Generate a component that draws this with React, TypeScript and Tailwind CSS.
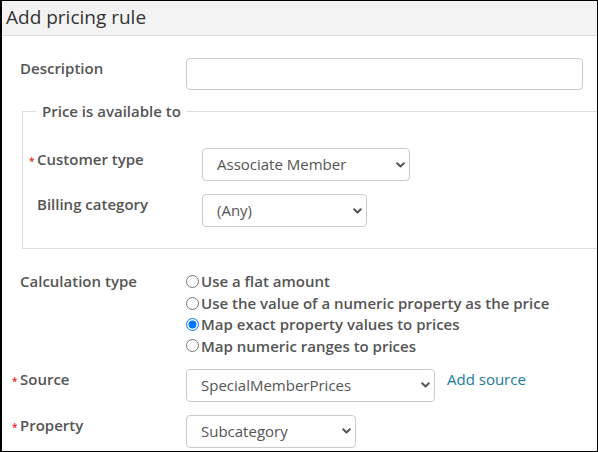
import React from "react";

function Chevron() {
  return (
    <svg className="pointer-events-none absolute right-[5px] top-1/2 -translate-y-1/2" width="9" height="6" viewBox="0 0 9 6" fill="none" stroke="#555" strokeWidth={2} strokeLinecap="round" strokeLinejoin="round">
      <path d="M1.2 1.2l3.3 3.3 3.3-3.3" />
    </svg>
  );
}

function Select({ value, width }: { value: string; width: string }) {
  return (
    <div className={`relative h-[33px] ${width}`}>
      <select
        defaultValue={value}
        className="h-full w-full appearance-none rounded-[4px] border border-[#ccc] bg-white pl-[14px] pr-[20px] text-[15px] text-[#555] outline-none"
      >
        <option>{value}</option>
      </select>
      <Chevron />
    </div>
  );
}

function Req() {
  return <span className="-ml-[8px] inline-block w-[8px] translate-y-[2px] align-top text-[10px] leading-[20px] text-[#e01b1b]">*</span>;
}

const label = "text-[15px] font-semibold leading-[20px] text-[#555]";

const calcTypes = [
  "Use a flat amount",
  "Use the value of a numeric property as the price",
  "Map exact property values to prices",
  "Map numeric ranges to prices",
];

export default function App() {
  return (
    <div className="h-[452px] w-[598px] overflow-hidden border border-l-2 border-black bg-white font-['Open_Sans',sans-serif]">
      <div className="h-[35px] border-b border-[#ddd] bg-[#f3f3f3] pl-[4px] text-[19px] leading-[32px] text-[#333]">
        Add pricing rule
      </div>

      <div className="pl-[18px]">
        <div className="mt-[22px] flex items-start">
          <div className={`w-[166px] ${label}`}>Description</div>
          <input className="h-[32px] w-[397px] rounded-[4px] border border-[#ccc] bg-white outline-none" />
        </div>

        <fieldset className="ml-[2px] mt-[11px] w-[600px] border border-[#ddd] p-0 pb-[21px]">
          <legend className={`ml-[13px] px-[6px] ${label}`}>Price is available to</legend>
          <div className="mt-[27px] flex flex-col gap-[13px] pl-[14px]">
            <div className="flex items-start">
              <div className={`w-[165px] pt-[1px] ${label}`}>
                <Req />
                Customer type
              </div>
              <Select value="Associate Member" width="w-[208px]" />
            </div>
            <div className="flex items-start">
              <div className={`w-[165px] ${label}`}>Billing category</div>
              <Select value="(Any)" width="w-[165px]" />
            </div>
          </div>
        </fieldset>

        <div className="mt-[22px] flex items-start">
          <div className={`w-[166px] ${label}`}>Calculation type</div>
          <div className="flex flex-col">
            {calcTypes.map((t, i) => (
              <label key={t} className="flex h-[21.4px] items-center text-[15px] font-semibold text-[#555]">
                <input type="radio" name="calc" defaultChecked={i === 2} className="m-0 mr-[2px] h-[13px] w-[13px]" />
                {t}
              </label>
            ))}
          </div>
        </div>

        <div className="mt-[12px] flex flex-col gap-[13px]">
          <div className="flex items-start">
            <div className={`w-[166px] ${label}`}>
              <Req />
              Source
            </div>
            <Select value="SpecialMemberPrices" width="w-[249px]" />
            <a className="ml-[12px] text-[15px] leading-[20px] text-[#1a7a9c]">Add source</a>
          </div>
          <div className="flex items-start">
            <div className={`w-[166px] ${label}`}>
              <Req />
              Property
            </div>
            <Select value="Subcategory" width="w-[170px]" />
          </div>
        </div>
      </div>
    </div>
  );
}
